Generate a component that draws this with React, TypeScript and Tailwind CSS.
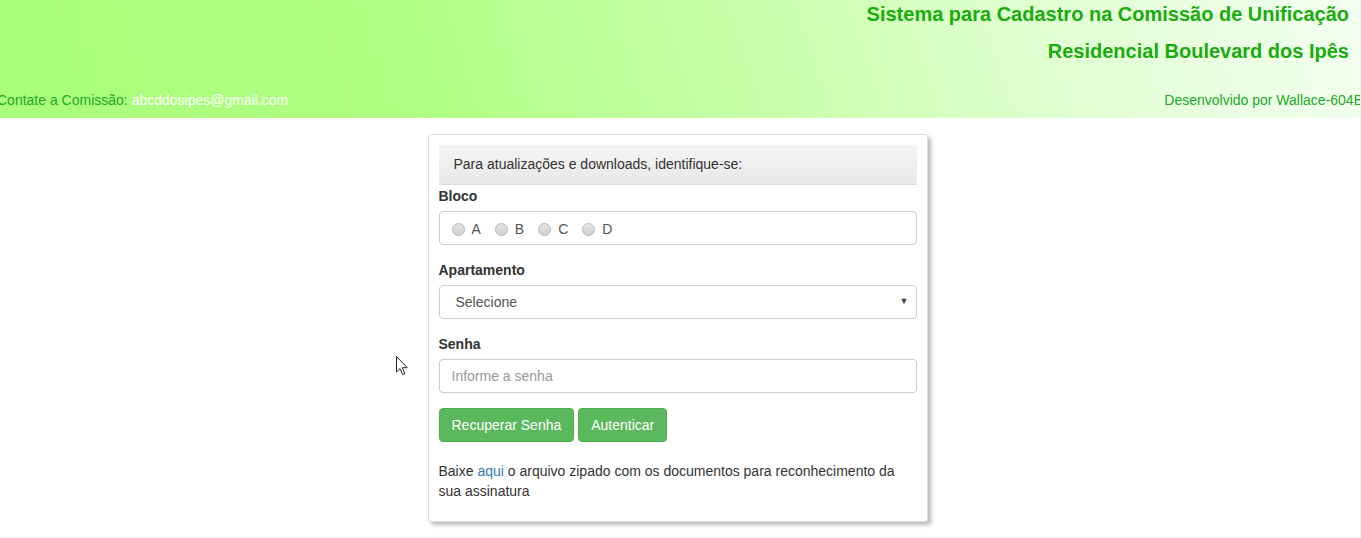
import React from "react";

function Radio({ label }: { label: string }) {
  return (
    <label className="flex items-center gap-[7px] mr-[14px]">
      <span className="w-[13px] h-[13px] rounded-full border border-[#b5b5b5] bg-[linear-gradient(#e6e6e6,#d0d0d0)] inline-block" />
      <span className="text-[14px] text-[#555]">{label}</span>
    </label>
  );
}

export default function App() {
  return (
    <div
      className="relative w-[1361px] h-[538px] overflow-hidden bg-white border-r border-b border-[#f2f2f2]"
      style={{ fontFamily: '"Liberation Sans", Arial, sans-serif' }}
    >
      <header className="h-[118px] flex flex-col bg-[linear-gradient(72deg,#a9ff77_0%,#b0ff84_30%,#c8ffaa_55%,#e2ffd4_78%,#f3fff0_100%)]">
        <div className="flex flex-col items-end pr-[11px] pt-[2px]">
          <h1 className="text-[20px] font-bold text-[#1aab0e] leading-[24px]">
            Sistema para Cadastro na Comissão de Unificação
          </h1>
          <h2 className="text-[20px] font-bold text-[#1aab0e] leading-[24px] mt-[13px]">
            Residencial Boulevard dos Ipês
          </h2>
        </div>
        <div className="mt-auto h-[30px] flex items-center justify-between text-[14px] leading-[20px] pb-[7px]">
          <span className="-ml-[3px] text-[#22a82a]">
            Contate a Comissão: <span className="text-white">abcddosipes@gmail.com</span>
          </span>
          <span className="-mr-[3px] text-[#22a82a]">Desenvolvido por Wallace-604B</span>
        </div>
      </header>

      <div className="flex justify-center mt-[16px] pr-[5px]">
        <div className="w-[500px] border border-[#dcdcdc] rounded-[3px] bg-white p-[10px] shadow-[3px_3px_4px_rgba(0,0,0,0.28)]">
          <div className="h-[40px] flex items-center pl-[15px] text-[14px] text-[#333] bg-[linear-gradient(#f5f5f5,#e8e8e8)] border-b border-[#dddddd]">
            Para atualizações e downloads, identifique-se:
          </div>

          <div className="text-[14px] font-bold text-[#333] leading-[20px] mt-[1px] mb-[5px]">Bloco</div>
          <div className="h-[34px] border border-[#ccc] rounded-[4px] flex items-center pl-[12px] pt-[2px]">
            <Radio label="A" />
            <Radio label="B" />
            <Radio label="C" />
            <Radio label="D" />
          </div>

          <div className="text-[14px] font-bold text-[#333] leading-[20px] mt-[15px] mb-[5px]">Apartamento</div>
          <div className="h-[34px] border border-[#ccc] rounded-[4px] flex items-center justify-between pl-[16px] pr-[7px]">
            <span className="text-[14px] text-[#555]">Selecione</span>
            <span className="text-[9px] text-[#444]">▼</span>
          </div>

          <div className="text-[14px] font-bold text-[#333] leading-[20px] mt-[15px] mb-[5px]">Senha</div>
          <div className="h-[34px] border border-[#ccc] rounded-[4px] flex items-center pl-[12px]">
            <span className="text-[14px] text-[#999]">Informe a senha</span>
          </div>

          <div className="flex gap-[4px] mt-[15px]">
            <button className="h-[34px] px-[12px] rounded-[4px] bg-[#5cb85c] border border-[#4cae4c] text-white text-[14px]">
              Recuperar Senha
            </button>
            <button className="h-[34px] px-[12px] rounded-[4px] bg-[#5cb85c] border border-[#4cae4c] text-white text-[14px]">
              Autenticar
            </button>
          </div>

          <p className="mt-[19px] mb-[10px] text-[14px] leading-[20px] text-[#333] pr-[10px]">
            Baixe <span className="text-[#337ab7]">aqui</span> o arquivo zipado com os documentos para reconhecimento da sua assinatura
          </p>
        </div>
      </div>

      <svg className="absolute left-[396px] top-[356px]" width="13" height="20" viewBox="0 0 13 20">
        <path d="M0.5 0.5 L0.5 16 L4 12.6 L6.6 18.6 L8.9 17.6 L6.3 11.7 L11.2 11.7 Z" fill="white" stroke="#222" strokeWidth="1" strokeLinejoin="round" />
      </svg>
    </div>
  );
}
